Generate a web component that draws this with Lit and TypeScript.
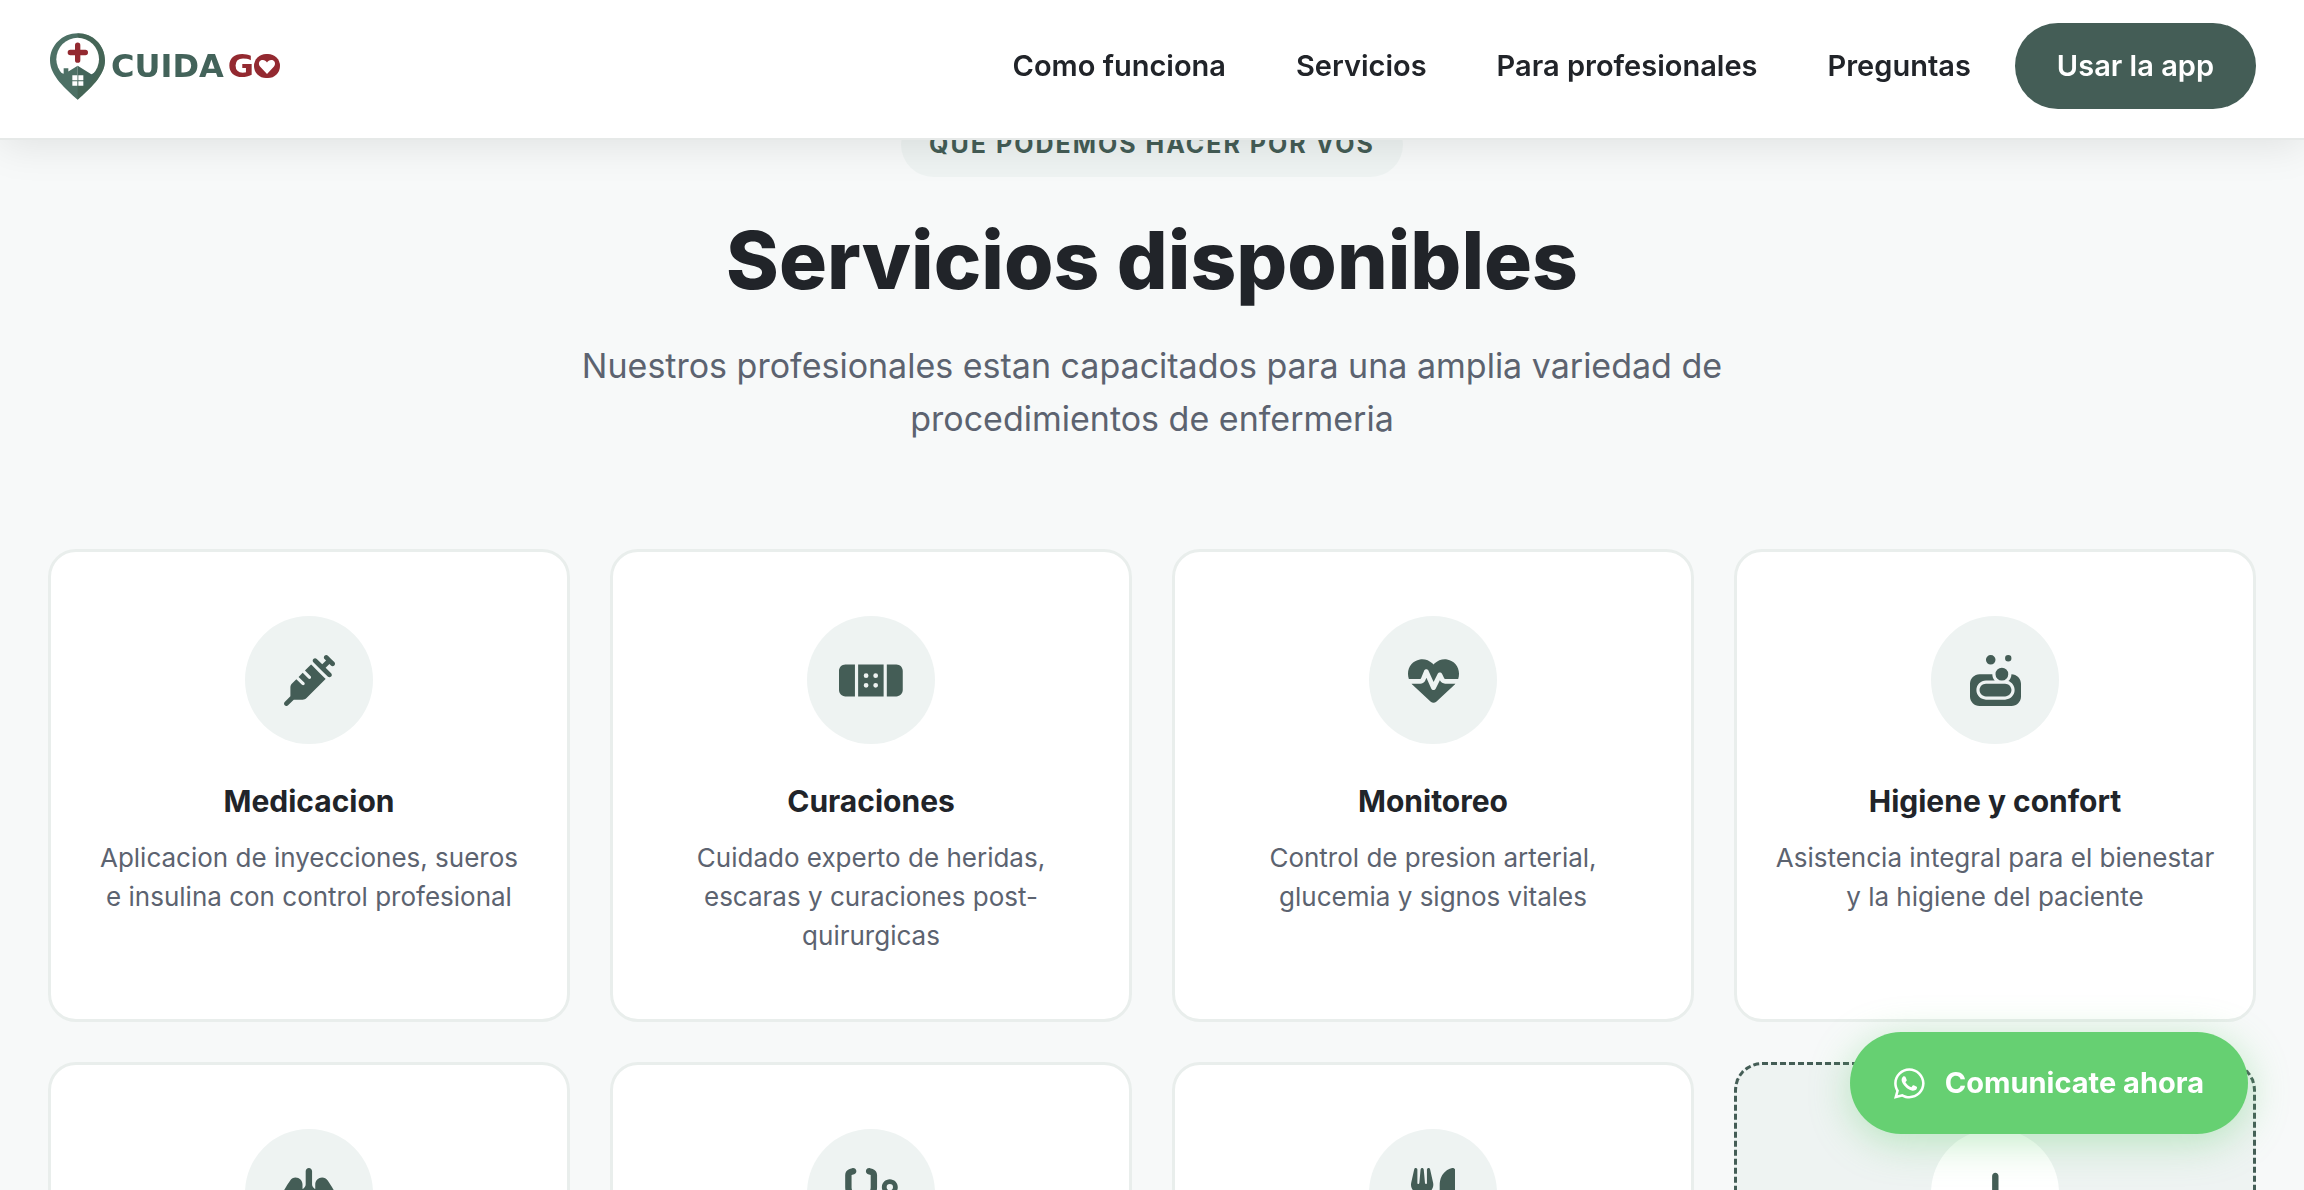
import { LitElement, html, css, svg } from "lit";
import { customElement, property } from "lit/decorators.js";
import { classMap } from "lit/directives/class-map.js";

interface Glyph {
  width: number;
  path: string;
}

const GLYPHS: Record<string, Glyph> = {
  syringe: {
    width: 512,
    path: "M441 7l32 32 32 32c9.4 9.4 9.4 24.6 0 33.9s-24.6 9.4-33.9 0l-15-15L417.9 128l55 55c9.4 9.4 9.4 24.6 0 33.9s-24.6 9.4-33.9 0l-72-72L295 73c-9.4-9.4-9.4-24.6 0-33.9s24.6-9.4 33.9 0l55 55L422.1 56 407 41c-9.4-9.4-9.4-24.6 0-33.9s24.6-9.4 33.9 0zM210.3 155.7l61.1-61.1c.3 .3 .6 .7 1 1l16 16 56 56 56 56 16 16c.3 .3 .6 .6 1 1l-191 191c-10.5 10.5-24.7 16.4-39.6 16.4H97.9L41 505c-9.4 9.4-24.6 9.4-33.9 0s-9.4-24.6 0-33.9l57-57V325.3c0-14.9 5.9-29.1 16.4-39.6l43.3-43.3 57 57c6.2 6.2 16.4 6.2 22.6 0s6.2-16.4 0-22.6l-57-57 41.4-41.4 57 57c6.2 6.2 16.4 6.2 22.6 0s6.2-16.4 0-22.6l-57-57z",
  },
  bandage: {
    width: 640,
    path: "M480 416h96c35.3 0 64-28.7 64-64V160c0-35.3-28.7-64-64-64H480V416zM448 96H192V416H448V96zM64 96C28.7 96 0 124.7 0 160V352c0 35.3 28.7 64 64 64h96V96H64zM248 208a24 24 0 1 1 48 0 24 24 0 1 1 -48 0zm120-24a24 24 0 1 1 0 48 24 24 0 1 1 0-48zM248 304a24 24 0 1 1 48 0 24 24 0 1 1 -48 0zm120-24a24 24 0 1 1 0 48 24 24 0 1 1 0-48z",
  },
  heartPulse: {
    width: 512,
    path: "M228.3 469.1L47.6 300.4c-4.2-3.9-8.2-8.1-11.9-12.4h87c22.6 0 43-13.6 51.7-34.5l10.5-25.2 49.3 109.5c3.8 8.5 12.1 14 21.4 14.1s17.8-5 22-13.3L320 253.7l1.7 3.4c9.5 19 28.9 31 50.1 31H476.3c-3.7 4.3-7.7 8.5-11.9 12.4L283.7 469.1c-7.5 7-17.4 10.9-27.7 10.9s-20.2-3.9-27.7-10.9zM503.7 240h-132c-3 0-5.8-1.7-7.2-4.4l-23.2-46.3c-4.1-8.1-12.4-13.3-21.5-13.3s-17.4 5.1-21.5 13.3l-41.4 82.8L205.9 158.2c-3.9-8.7-12.7-14.3-22.2-14.1s-18.1 5.9-21.8 14.8l-31.8 76.3c-1.2 3-4.2 4.9-7.4 4.9H16c-2.6 0-5 .4-7.3 1.1C3 225.2 0 208.2 0 190.9v-5.8c0-69.9 50.5-129.5 119.4-141C165 36.5 211.4 51.4 244 84l12 12 12-12c32.6-32.6 79-47.5 124.6-39.9C461.5 55.6 512 115.2 512 185.1v5.8c0 16.9-2.8 33.5-8.3 49.1z",
  },
  soap: {
    width: 512,
    path: "M208 96A48 48 0 1 0 208 0a48 48 0 1 0 0 96zM320 256a64 64 0 1 0 0-128 64 64 0 1 0 0 128zM416 32a32 32 0 1 0 -64 0 32 32 0 1 0 64 0zm0 160c0 27.6-11.7 52.5-30.4 70.1C422.1 275.7 448 310.8 448 352c0 53-43 96-96 96H160c-53 0-96-43-96-96s43-96 96-96h88.4c-15.2-17-24.4-39.4-24.4-64H96c-53 0-96 43-96 96V416c0 53 43 96 96 96H416c53 0 96-43 96-96V288c0-53-43-96-96-96zM160 288c-35.3 0-64 28.7-64 64s28.7 64 64 64H352c35.3 0 64-28.7 64-64s-28.7-64-64-64H320 160z",
  },
  lungs: {
    width: 640,
    path: "M320 0c17.7 0 32 14.3 32 32V164.1c0 16.4 8.4 31.7 22.2 40.5l9.8 6.2V165.3C384 127 415 96 453.3 96c21.7 0 42.8 10.2 55.8 28.8c15.4 22.1 44.3 65.4 71 116.9c26.5 50.9 52.4 112.5 59.6 170.3c.2 1.3 .2 2.6 .2 4v7c0 49.1-39.8 89-89 89c-7.2 0-14.5-.9-21.5-2.7l-88.9-22.2C407 480 384 451 384 418V287L320 245 256 287V418c0 33-23 62-56.500 71.100l-88.900 22.200c-7 1.800-14.300 2.700-21.500 2.700c-49.200 0-89-39.900-89-89v-7c0-1.400 0-2.700 .2-4c7.200-57.800 33.100-119.400 59.600-170.300c26.700-51.500 55.600-94.800 71-116.900C143.900 106.200 165 96 186.700 96C225 96 256 127 256 165.300v45.500l9.800-6.200c13.800-8.800 22.200-24.100 22.200-40.500V32c0-17.700 14.300-32 32-32z",
  },
  stethoscope: {
    width: 576,
    path: "M142.4 21.9c5.6 16.8-3.5 34.9-20.2 40.5L96 71.1V192c0 53 43 96 96 96s96-43 96-96V71.1l-26.1-8.7c-16.8-5.6-25.8-23.7-20.2-40.5s23.7-25.8 40.5-20.2l26.1 8.7C334.4 19.1 352 43.5 352 71.1V192c0 77.2-54.6 141.6-127.3 156.7C231 404.6 278.4 448 336 448c61.9 0 112-50.1 112-112V265.3c-28.3-12.3-48-40.5-48-73.3c0-44.2 35.8-80 80-80s80 35.800 80 80c0 32.800-19.700 61-48 73.300V336c0 97.200-78.800 176-176 176c-92.900 0-168.900-71.900-175.500-163.100C87.200 334.200 32 269.600 32 192V71.100c0-27.500 17.600-52 43.800-60.700l26.100-8.700c16.800-5.600 34.900 3.500 40.500 20.200zM480 224a32 32 0 1 0 0-64 32 32 0 1 0 0 64z",
  },
  utensils: {
    width: 448,
    path: "M416 0C400 0 288 32 288 176V288c0 35.3 28.7 64 64 64h32V480c0 17.7 14.3 32 32 32s32-14.3 32-32V352 240 32c0-17.7-14.3-32-32-32zM64 16C64 7.8 57.9 1 49.7 .1S34.2 4.6 32.4 12.5L2.1 148.8C.7 155.1 0 161.5 0 167.9c0 45.9 35.1 83.6 80 87.7V480c0 17.7 14.3 32 32 32s32-14.3 32-32V255.6c44.9-4.1 80-41.8 80-87.7c0-6.4-.7-12.8-2.1-19.1L191.6 12.5c-1.8-8-9.3-13.3-17.4-12.4S160 7.8 160 16V150.2c0 5.4-4.4 9.8-9.8 9.8c-5.1 0-9.3-3.9-9.8-9L127.9 14.6C127.2 6.3 120.3 0 112 0s-15.2 6.3-15.9 14.6L83.7 151c-.5 5.1-4.7 9-9.8 9c-5.4 0-9.8-4.4-9.8-9.8V16z",
  },
  plus: {
    width: 448,
    path: "M256 80c0-17.7-14.3-32-32-32s-32 14.3-32 32V224H48c-17.7 0-32 14.3-32 32s14.3 32 32 32H192V432c0 17.7 14.3 32 32 32s32-14.3 32-32V288H400c17.7 0 32-14.3 32-32s-14.3-32-32-32H256V80z",
  },
  whatsapp: {
    width: 448,
    path: "M380.9 97.1C339 55.1 283.2 32 223.9 32c-122.4 0-222 99.6-222 222 0 39.1 10.2 77.3 29.6 111L0 480l117.7-30.9c32.4 17.7 68.9 27 106.1 27h.1c122.3 0 224.1-99.6 224.1-222 0-59.3-25.2-115-67.1-157zm-157 341.6c-33.2 0-65.7-8.9-94-25.7l-6.7-4-69.8 18.3L72 359.2l-4.4-7c-18.5-29.4-28.2-63.3-28.2-98.2 0-101.7 82.8-184.5 184.6-184.5 49.3 0 95.600 19.200 130.400 54.100 34.800 34.900 56.200 81.200 56.100 130.500 0 101.800-84.900 184.600-186.600 184.600zm101.200-138.200c-5.500-2.800-32.800-16.200-37.900-18-5.100-1.900-8.800-2.800-12.500 2.800-3.700 5.600-14.300 18-17.600 21.800-3.200 3.700-6.500 4.200-12 1.400-32.600-16.300-54-29.100-75.500-66-5.700-9.800 5.700-9.100 16.300-30.300 1.800-3.700.9-6.900-.5-9.700-1.400-2.800-12.500-30.100-17.100-41.200-4.500-10.800-9.100-9.300-12.500-9.500-3.200-.2-6.900-.2-10.600-.2-3.700 0-9.700 1.400-14.800 6.900-5.100 5.600-19.400 19-19.400 46.300 0 27.300 19.900 53.700 22.600 57.400 2.800 3.700 39.100 59.700 94.800 83.800 35.200 15.200 49 16.500 66.600 13.900 10.700-1.600 32.800-13.400 37.400-26.400 4.600-13 4.600-24.100 3.200-26.400-1.300-2.500-5-3.900-10.500-6.600z",
  },
};

@customElement("app-icon")
class AppIcon extends LitElement {
  @property() name = "plus";

  static styles = css`
    :host {
      display: inline-flex;
    }
    .glyph {
      display: block;
      height: 1em;
      width: auto;
      fill: currentColor;
    }
  `;

  render() {
    const glyph = GLYPHS[this.name];
    return html`<svg class="glyph" viewBox="0 0 ${glyph.width} 512" aria-hidden="true">
      <path d=${glyph.path}></path>
    </svg>`;
  }
}

@customElement("brand-logo")
class BrandLogo extends LitElement {
  static styles = css`
    :host {
      display: block;
    }
    .brand {
      display: flex;
      align-items: center;
      gap: 6px;
      padding-left: 2px;
      color: #43635a;
      font: 700 32px/40px "DejaVu Sans", Inter, sans-serif;
      text-decoration: none;
    }
    .pin {
      display: block;
      width: 55px;
      height: 67px;
    }
    .words {
      display: flex;
      align-items: center;
      gap: 4px;
    }
    .go {
      display: flex;
      align-items: center;
      color: #932930;
    }
    .heart {
      display: block;
      width: 26px;
      height: 24px;
    }
  `;

  render() {
    return html`<a class="brand" href="#inicio">
      <svg class="pin" viewBox="0 0 165 200" aria-hidden="true">
        ${svg`
          <path fill="#4d7065" d="M83 0C37 0 0 36 0 82C0 128 48 168 83 200C118 168 165 128 165 82C165 36 129 0 83 0Z"/>
          <path fill="#41604f" d="M83 0C129 0 165 36 165 82C165 128 118 168 83 200Z" opacity=".65"/>
          <circle cx="83" cy="78" r="64" fill="#fff"/>
          <path fill="#4d7065" d="M22 116L41 122V105H55V115L83 98V158H50Z"/>
          <path fill="#43655a" d="M83 98L124 123L144 114L116 158H83Z"/>
          <path fill="#932930" d="M75 36a8 8 0 0 1 16 0V50H106a8 8 0 0 1 0 16H91V81a8 8 0 0 1-16 0V66H61a8 8 0 0 1 0-16H75Z"/>
          <path fill="#fff" d="M67 126H82V141H67ZM85 126H100V141H85ZM67 144H82V158H67ZM85 144H100V158H85Z"/>
        `}
      </svg>
      <span class="words">
        <span>CUIDA</span>
        <span class="go">
          <span>G</span>
          <svg class="heart" viewBox="0 0 26 24" role="img" aria-label="O">
            ${svg`
              <rect width="26" height="24" rx="12" fill="#932930"/>
              <path fill="#fff" d="M13 20L6 12.500C4 10 5 6.500 8 6C10 5.600 12 6.700 13 8.500C14 6.700 16 5.600 18 6C21 6.500 22 10 20 12.500Z"/>
            `}
          </svg>
        </span>
      </span>
    </a>`;
  }
}

@customElement("service-card")
class ServiceCard extends LitElement {
  @property() icon = "plus";
  @property() heading = "";
  @property() text = "";
  @property({ type: Boolean }) dashed = false;

  static styles = css`
    :host {
      display: grid;
    }
    .card {
      display: flex;
      flex-direction: column;
      align-items: center;
      padding: 64px 36px;
      border: 3px solid #e9eeec;
      border-radius: 28px;
      background: #fff;
      text-align: center;
    }
    .disc {
      display: flex;
      align-items: center;
      justify-content: center;
      width: 128px;
      height: 128px;
      border-radius: 50%;
      background: #eef3f2;
      color: #445d56;
      font-size: 51px;
    }
    .card.dashed {
      border: 3px dashed #445d56;
      background: #eef3f2;
    }
    .dashed .disc {
      background: #fff;
    }
    .title {
      margin: 38px 0 0;
      color: #212429;
      font-size: 30px;
      font-weight: 700;
      line-height: 38px;
    }
    .text {
      margin: 18px 0 0;
      color: #5c6370;
      font-size: 26px;
      line-height: 39px;
    }
  `;

  render() {
    return html`<article class=${classMap({ card: true, dashed: this.dashed })}>
      <span class="disc"><app-icon name=${this.icon}></app-icon></span>
      ${this.heading ? html`<h3 class="title">${this.heading}</h3>` : null}
      ${this.text ? html`<p class="text">${this.text}</p>` : null}
    </article>`;
  }
}

const LINKS = [
  { label: "Como funciona", href: "#como-funciona" },
  { label: "Servicios", href: "#servicios" },
  { label: "Para profesionales", href: "#para-profesionales" },
  { label: "Preguntas", href: "#preguntas" },
];

const SERVICES = [
  {
    icon: "syringe",
    heading: "Medicacion",
    text: "Aplicacion de inyecciones, sueros e\u00a0insulina con control profesional",
  },
  {
    icon: "bandage",
    heading: "Curaciones",
    text: "Cuidado experto de heridas, escaras y curaciones post-quirurgicas",
  },
  {
    icon: "heartPulse",
    heading: "Monitoreo",
    text: "Control de presion arterial, glucemia y signos vitales",
  },
  {
    icon: "soap",
    heading: "Higiene y confort",
    text: "Asistencia integral para el bienestar y la higiene del paciente",
  },
  { icon: "lungs", heading: "", text: "" },
  { icon: "stethoscope", heading: "", text: "" },
  { icon: "utensils", heading: "", text: "" },
  { icon: "plus", heading: "", text: "", dashed: true },
];

@customElement("app-root")
class AppRoot extends LitElement {
  static styles = css`
    :host {
      display: block;
      height: 100vh;
      overflow: hidden;
      background: #f7f9f9;
      color: #212429;
      font-family: Inter, "Liberation Sans", sans-serif;
    }
    .header {
      position: sticky;
      top: 0;
      z-index: 2;
      display: flex;
      align-items: center;
      justify-content: space-between;
      padding: 23px 48px 29px;
      border-bottom: 2px solid #e6e9e8;
      background: #fff;
      box-shadow: 0 4px 40px rgba(0, 0, 0, 0.1);
    }
    .nav {
      display: flex;
      align-items: center;
      gap: 70px;
    }
    .link {
      color: #212429;
      font-size: 29px;
      font-weight: 600;
      line-height: 38px;
      text-decoration: none;
    }
    .cta {
      margin-left: -26px;
      padding: 24px 42px;
      border-radius: 43px;
      background: #445d56;
      color: #fff;
    }
    .section {
      display: flex;
      flex-direction: column;
      align-items: center;
      margin-top: -28px;
      padding: 0 48px 96px;
    }
    .badge {
      padding: 16px 28px;
      border-radius: 33px;
      background: #eef3f2;
      color: #445d56;
      font-size: 25px;
      font-weight: 700;
      line-height: 33px;
      letter-spacing: 2px;
      text-transform: uppercase;
    }
    .heading {
      margin: 32px 0 0;
      font-size: 80px;
      font-weight: 800;
      line-height: 102px;
      text-align: center;
    }
    .lead {
      max-width: 1200px;
      margin: 28px 0 0;
      color: #5c6370;
      font-size: 34px;
      line-height: 53px;
      text-align: center;
    }
    .grid {
      display: grid;
      grid-template-columns: repeat(4, minmax(0, 1fr));
      grid-auto-rows: 1fr;
      gap: 40px;
      align-self: stretch;
      margin-top: 104px;
    }
    .chat {
      position: fixed;
      right: 56px;
      bottom: 56px;
      z-index: 3;
      display: flex;
      align-items: center;
      gap: 20px;
      padding: 32px 44px;
      border-radius: 51px;
      background: #66d072;
      box-shadow: 0 8px 40px rgba(102, 208, 114, 0.4);
      color: #fff;
      font-size: 29px;
      font-weight: 700;
      line-height: 38px;
      text-decoration: none;
    }
    .chat-icon {
      font-size: 35px;
    }
  `;

  render() {
    return html`
      <header class="header">
        <brand-logo></brand-logo>
        <nav class="nav">
          ${LINKS.map((link) => html`<a class="link" href=${link.href}>${link.label}</a>`)}
          <a class="link cta" href="#app">Usar la app</a>
        </nav>
      </header>
      <section class="section" id="servicios">
        <span class="badge">Que podemos hacer por vos</span>
        <h2 class="heading">Servicios disponibles</h2>
        <p class="lead">
          Nuestros profesionales estan capacitados para una amplia variedad de procedimientos de
          enfermeria
        </p>
        <div class="grid">
          ${SERVICES.map(
            (service) => html`<service-card
              icon=${service.icon}
              heading=${service.heading}
              text=${service.text}
              ?dashed=${service.dashed ?? false}
            ></service-card>`,
          )}
        </div>
      </section>
      <a class="chat" href="#whatsapp">
        <app-icon class="chat-icon" name="whatsapp"></app-icon>
        <span>Comunicate ahora</span>
      </a>
    `;
  }
}
